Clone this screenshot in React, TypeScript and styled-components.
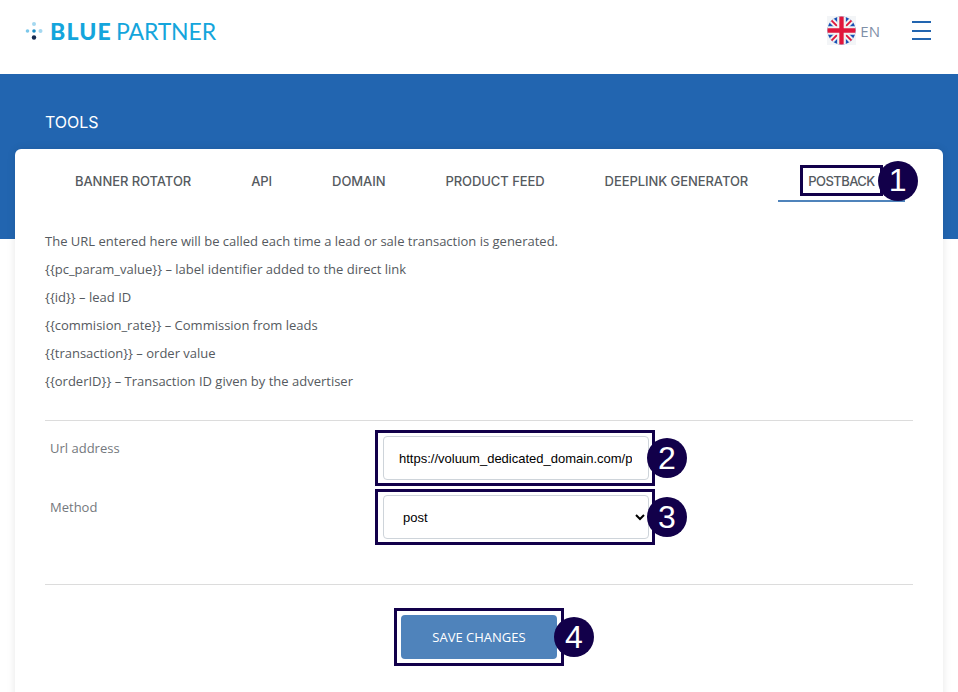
import styled, { createGlobalStyle } from 'styled-components';

const GlobalStyle = createGlobalStyle`
  html, body {
    margin: 0;
    padding: 0;
    background: #fff;
    overflow: hidden;
    font-family: "Open Sans", "Liberation Sans", sans-serif;
  }
  * { box-sizing: border-box; }
`;

const Page = styled.div`
  width: 958px;
  height: 692px;
  overflow: hidden;
`;

const Header = styled.header`
  height: 74px;
  display: flex;
  align-items: center;
  justify-content: space-between;
  padding: 0 27px 13px 25px;
`;

const Logo = styled.div`
  display: flex;
  align-items: center;
  gap: 5px;
  font-family: Lato, sans-serif;
  font-size: 23px;
  line-height: 26px;
  color: #14a5dc;
`;

const LogoText = styled.div`
  display: flex;
  gap: 4px;
`;

const LogoWord = styled.span<{ $bold?: boolean }>`
  font-weight: ${(p) => (p.$bold ? 900 : 400)};
  letter-spacing: ${(p) => (p.$bold ? '1.2px' : '-0.15px')};
`;

const HeaderRight = styled.div`
  display: flex;
  align-items: center;
`;

const Lang = styled.span`
  font-size: 15px;
  color: #7f90a8;
  margin-left: 4px;
  margin-right: 32px;
`;

const Burger = styled.div`
  width: 19px;
  display: flex;
  flex-direction: column;
  gap: 6.5px;
`;

const BurgerLine = styled.span`
  display: block;
  height: 2px;
  background: #2265b0;
`;

const Hero = styled.section`
  height: 165px;
  background: #2265b0;
  padding: 38px 45px 0;
`;

const HeroTitle = styled.h1`
  margin: 0;
  font-family: Inter, sans-serif;
  font-size: 16px;
  line-height: 20px;
  font-weight: 400;
  color: #fff;
`;

const Card = styled.main`
  position: relative;
  margin: -90px 15px 0;
  height: 560px;
  background: #fff;
  border-radius: 6px;
  padding: 0 30px;
  box-shadow: 0 0 8px rgba(0, 0, 0, 0.1);
`;

const Tabs = styled.nav`
  display: flex;
  height: 52px;
`;

const Tab = styled.div<{ $active?: boolean }>`
  display: flex;
  align-items: center;
  padding: 12px 30px 0;
  height: 53px;
  font-family: Inter, sans-serif;
  font-size: 13px;
  font-weight: 500;
  letter-spacing: ${(p) => (p.$active ? '-0.55px' : '-0.067px')};
  white-space: nowrap;
  color: #555a60;
  border-bottom: 2px solid ${(p) => (p.$active ? '#4f83bb' : 'transparent')};
`;

const TabLabel = styled.span`
  position: relative;
`;

const TabOutline = styled.span`
  position: absolute;
  left: -8px;
  right: -8px;
  top: -8px;
  bottom: -7px;
  border: 3px solid #12004a;
`;

const Info = styled.div`
  margin-top: 26px;
  font-size: 13px;
  line-height: 28px;
  color: #555a60;
`;

const InfoLine = styled.p`
  margin: 0;
`;

const Divider = styled.hr`
  margin: 25px 0 0;
  border: 0;
  border-top: 1px solid #dcdcdc;
`;

const FormGrid = styled.div`
  display: grid;
  grid-template-columns: 330px 280px;
  row-gap: 3px;
  margin-top: 9px;
`;

const FieldLabel = styled.label`
  padding: 10px 0 0 5px;
  font-size: 13px;
  line-height: 17px;
  color: #74787d;
`;

const Marked = styled.div`
  position: relative;
  border: 3px solid #12004a;
  padding: 3px 3px 3px 5px;
`;

const TextInput = styled.input`
  display: block;
  width: 266px;
  height: 44px;
  padding: 0 16px 0 15px;
  border: 1px solid #ced4da;
  border-radius: 4px;
  background: #fff;
  color: #000;
  font-family: "Liberation Sans", Arial, sans-serif;
  font-size: 13px;
  outline: none;
`;

const Select = styled.select`
  display: block;
  width: 266px;
  height: 44px;
  padding: 0 0 0 15px;
  border: 1px solid #ced4da;
  border-radius: 4px;
  background: #fff;
  color: #000;
  font-family: "Liberation Sans", Arial, sans-serif;
  font-size: 13px;
  outline: none;
`;

const FormDivider = styled(Divider)`
  margin-top: 39px;
`;

const Actions = styled.div`
  display: flex;
  justify-content: center;
  margin-top: 23px;
`;

const ButtonMark = styled(Marked)`
  padding: 4px;
`;

const SaveButton = styled.button`
  display: block;
  width: 156px;
  height: 44px;
  border: 0;
  border-radius: 4px;
  background: #4f83bb;
  color: #fff;
  font-family: "Open Sans", sans-serif;
  font-size: 13px;
  cursor: pointer;
`;

const Badge = styled.span<{ $right: number }>`
  position: absolute;
  right: ${(p) => p.$right}px;
  top: 50%;
  width: 40px;
  height: 40px;
  transform: translateY(-50%);
  display: flex;
  align-items: center;
  justify-content: center;
  border-radius: 50%;
  background: #12004a;
  color: #fff;
  font-family: "Liberation Sans", Arial, sans-serif;
  font-size: 32px;
  font-weight: 400;
  letter-spacing: 0;
`;

const LogoMark = () => (
  <svg width="20" height="18" viewBox="0 0 20 18">
    <circle cx="9" cy="2" r="2" fill="#a5d8f0" />
    <circle cx="2.5" cy="9" r="1.8" fill="#7cc8ea" />
    <circle cx="9" cy="9" r="1.8" fill="#1c8cc4" />
    <circle cx="15.5" cy="9" r="2" fill="#a5d8f0" />
    <circle cx="9" cy="15.5" r="2.2" fill="#16294f" />
  </svg>
);

const Flag = () => (
  <svg width="29" height="29" viewBox="0 0 30 30">
    <defs>
      <clipPath id="flag-circle">
        <circle cx="15" cy="15" r="14.5" />
      </clipPath>
    </defs>
    <rect width="30" height="30" fill="#f3f5f7" />
    <g clipPath="url(#flag-circle)">
      <rect width="30" height="30" fill="#1a52b4" />
      <path d="M0 0L30 30M30 0L0 30" stroke="#f2f2f2" strokeWidth="6" />
      <path d="M0 0L30 30M30 0L0 30" stroke="#e0173c" strokeWidth="2" />
      <path d="M15 0V30M0 15H30" stroke="#f2f2f2" strokeWidth="9" />
      <path d="M15 0V30M0 15H30" stroke="#e0173c" strokeWidth="4.5" />
    </g>
  </svg>
);

const tabs = ['BANNER ROTATOR', 'API', 'DOMAIN', 'PRODUCT FEED', 'DEEPLINK GENERATOR'];

const infoLines = [
  'The URL entered here will be called each time a lead or sale transaction is generated.',
  '{{pc_param_value}} – label identifier added to the direct link',
  '{{id}} – lead ID',
  '{{commision_rate}} – Commission from leads',
  '{{transaction}} – order value',
  '{{orderID}} – Transaction ID given by the advertiser',
];

const App = () => {
  return (
    <Page>
      <GlobalStyle />
      <Header>
        <Logo>
          <LogoMark />
          <LogoText>
            <LogoWord $bold>BLUE</LogoWord>
            <LogoWord>PARTNER</LogoWord>
          </LogoText>
        </Logo>
        <HeaderRight>
          <Flag />
          <Lang>EN</Lang>
          <Burger>
            <BurgerLine />
            <BurgerLine />
            <BurgerLine />
          </Burger>
        </HeaderRight>
      </Header>

      <Hero>
        <HeroTitle>TOOLS</HeroTitle>
      </Hero>

      <Card>
        <Tabs>
          {tabs.map((t) => (
            <Tab key={t}>{t}</Tab>
          ))}
          <Tab $active>
            <TabLabel>
              POSTBACK
              <TabOutline />
              <Badge $right={-43}>1</Badge>
            </TabLabel>
          </Tab>
        </Tabs>

        <Info>
          {infoLines.map((line) => (
            <InfoLine key={line}>{line}</InfoLine>
          ))}
        </Info>

        <Divider />

        <FormGrid>
          <FieldLabel>Url address</FieldLabel>
          <Marked>
            <TextInput readOnly value="https://voluum_dedicated_domain.com/postback?cid={{pc_param_value}}" />
            <Badge $right={-35}>2</Badge>
          </Marked>
          <FieldLabel>Method</FieldLabel>
          <Marked>
            <Select defaultValue="post">
              <option value="post">post</option>
              <option value="get">get</option>
            </Select>
            <Badge $right={-35}>3</Badge>
          </Marked>
        </FormGrid>

        <FormDivider />

        <Actions>
          <ButtonMark>
            <SaveButton>SAVE CHANGES</SaveButton>
            <Badge $right={-33}>4</Badge>
          </ButtonMark>
        </Actions>
      </Card>
    </Page>
  );
};

export default App;
